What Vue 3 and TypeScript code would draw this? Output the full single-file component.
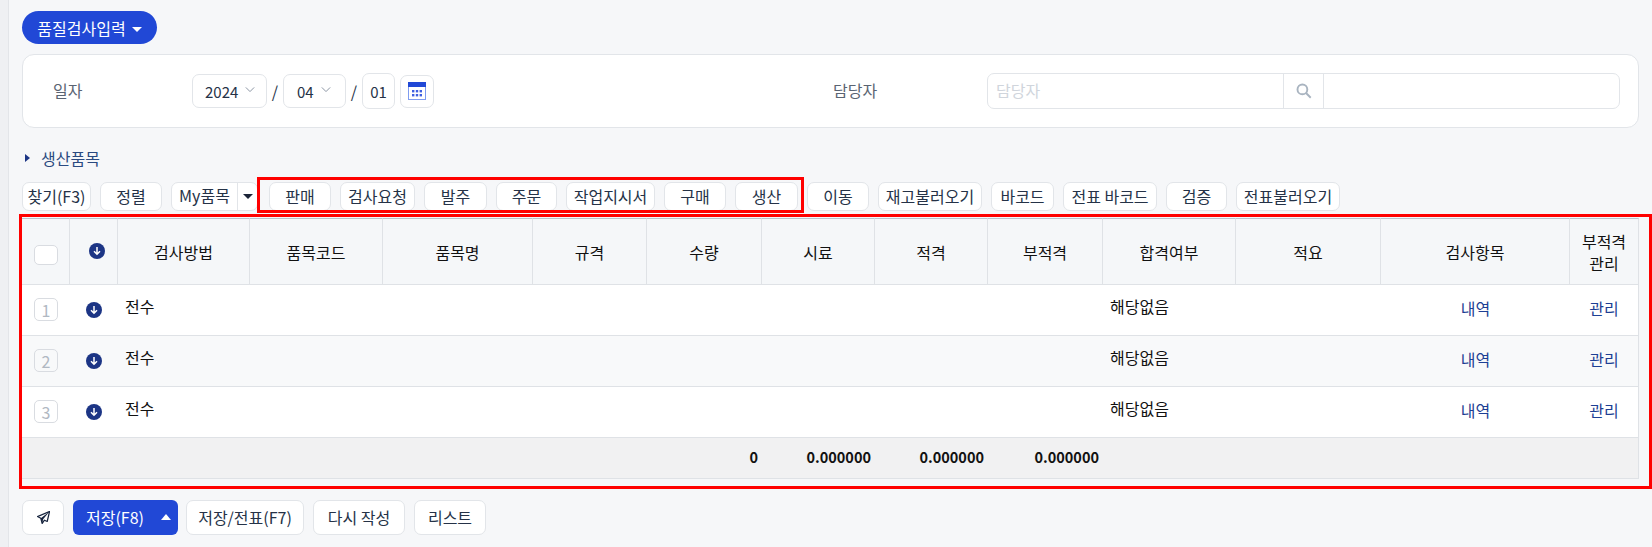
<script setup lang="ts">
interface ToolButton {
  label: string
  width: number
}

const leftButtons: ToolButton[] = [
  { label: '찾기(F3)', width: 69 },
  { label: '정렬', width: 62 }
]

const markedButtons: ToolButton[] = [
  { label: '판매', width: 62 },
  { label: '검사요청', width: 75 },
  { label: '발주', width: 63 },
  { label: '주문', width: 61 },
  { label: '작업지시서', width: 89 },
  { label: '구매', width: 62 },
  { label: '생산', width: 63 }
]

const rightButtons: ToolButton[] = [
  { label: '이동', width: 62 },
  { label: '재고불러오기', width: 104 },
  { label: '바코드', width: 63 },
  { label: '전표 바코드', width: 94 },
  { label: '검증', width: 61 },
  { label: '전표불러오기', width: 104 }
]

const columnWidths = [48, 48, 132, 133, 150, 114, 115, 113, 113, 115, 133, 145, 189, 69]
const headers = ['검사방법', '품목코드', '품목명', '규격', '수량', '시료', '적격', '부적격', '합격여부', '적요', '검사항목']
const rows = [1, 2, 3]
</script>

<template>
  <div class="page">
    <div class="strip"></div>
    <main class="main">
      <button class="pill">품질검사입력 <span class="caret-down"></span></button>

      <section class="card">
        <div class="field date-field">
          <label class="label date-label">일자</label>
          <div class="select year">2024<svg class="chev" viewBox="0 0 12 8"><path d="M1 1.5l5 5 5-5" /></svg></div>
          <span class="slash">/</span>
          <div class="select month">04<svg class="chev" viewBox="0 0 12 8"><path d="M1 1.5l5 5 5-5" /></svg></div>
          <span class="slash">/</span>
          <div class="day">01</div>
          <button class="cal-btn">
            <svg width="18" height="18" viewBox="0 0 18 18">
              <rect x="0.5" y="0.5" width="17" height="17" fill="#fff" stroke="#7f9cf0" />
              <rect x="0" y="0" width="18" height="5" fill="#2148d6" />
              <g fill="#3f5fe0">
                <rect x="4" y="8" width="2.4" height="2.4" />
                <rect x="7.8" y="8" width="2.4" height="2.4" />
                <rect x="11.6" y="8" width="2.4" height="2.4" />
                <rect x="4" y="12" width="2.4" height="2.4" />
                <rect x="7.8" y="12" width="2.4" height="2.4" />
                <rect x="11.6" y="12" width="2.4" height="2.4" />
              </g>
            </svg>
          </button>
        </div>
        <div class="field person-field">
          <label class="label person-label">담당자</label>
          <div class="person-input">
            <span class="placeholder">담당자</span>
            <span class="search">
              <svg width="16" height="16" viewBox="0 0 15 15" fill="none" stroke="#a9b4c0" stroke-width="1.8">
                <circle cx="6" cy="6" r="4.6" />
                <path d="M9.4 9.4l4.4 4.4" />
              </svg>
            </span>
            <span class="person-name"></span>
          </div>
        </div>
      </section>

      <div class="section-title"><span class="caret-right"></span>생산품목</div>

      <div class="toolbar">
        <button v-for="b in leftButtons" :key="b.label" class="tool" :style="{ width: b.width + 'px' }">{{ b.label }}</button>
        <div class="my-item">
          <span class="my-text">My품목</span>
          <span class="my-drop"><span class="caret-dark"></span></span>
        </div>
        <div class="marked-group">
          <button v-for="b in markedButtons" :key="b.label" class="tool" :style="{ width: b.width + 'px' }">{{ b.label }}</button>
          <div class="mark mark-tools"></div>
        </div>
        <button v-for="b in rightButtons" :key="b.label" class="tool" :style="{ width: b.width + 'px' }">{{ b.label }}</button>
      </div>

      <div class="table-wrap">
        <table class="grid">
          <colgroup>
            <col v-for="(w, i) in columnWidths" :key="i" :style="{ width: w + 'px' }" />
          </colgroup>
          <thead>
            <tr>
              <th><span class="check"></span></th>
              <th>
                <svg class="down head-down" viewBox="0 0 16 16">
                  <circle cx="8" cy="8" r="8" fill="#1c3585" />
                  <path d="M8 4v7M5 8.2L8 11.2l3-3" fill="none" stroke="#fff" stroke-width="1.5" />
                </svg>
              </th>
              <th v-for="h in headers" :key="h">{{ h }}</th>
              <th class="wrap">부적격<br />관리</th>
            </tr>
          </thead>
          <tbody>
            <tr v-for="n in rows" :key="n">
              <td class="center"><span class="num">{{ n }}</span></td>
              <td class="center">
                <svg class="down" viewBox="0 0 16 16">
                  <circle cx="8" cy="8" r="8" fill="#1c3585" />
                  <path d="M8 4v7M5 8.2L8 11.2l3-3" fill="none" stroke="#fff" stroke-width="1.5" />
                </svg>
              </td>
              <td class="text">전수</td>
              <td colspan="7"></td>
              <td class="text">해당없음</td>
              <td></td>
              <td class="link">내역</td>
              <td class="link">관리</td>
            </tr>
          </tbody>
          <tfoot>
            <tr>
              <td colspan="6"></td>
              <td class="sum">0</td>
              <td class="sum">0.000000</td>
              <td class="sum">0.000000</td>
              <td class="sum">0.000000</td>
              <td colspan="4"></td>
            </tr>
          </tfoot>
        </table>
        <div class="mark mark-table"></div>
      </div>

      <div class="actions">
        <button class="act plane">
          <svg width="13" height="13" viewBox="0 0 14 14">
            <path d="M13.5 0.5L0.5 6l3.6 1.8L5.6 13.5l2.4-3.6 3 1.4z" fill="#fff" stroke="#16233d" stroke-width="1.3" stroke-linejoin="round" />
            <path d="M13.5 0.5L4.1 7.8l1.5 5.7 1-4.6z" fill="#16233d" />
          </svg>
        </button>
        <button class="save"><span>저장(F8)</span><span class="caret-up"></span></button>
        <button class="act w-slip">저장/전표(F7)</button>
        <button class="act w-reset">다시 작성</button>
        <button class="act w-list">리스트</button>
      </div>
    </main>
  </div>
</template>

<style>
html,
body {
  margin: 0;
  background: #f6f7f9;
}
</style>

<style scoped>
.page {
  display: flex;
  width: 1652px;
  height: 547px;
  overflow: hidden;
  background: #f6f7f9;
  font-family: "Noto Sans CJK KR", "Noto Sans", sans-serif;
  font-size: 16px;
  color: #253247;
}
button {
  font: inherit;
  color: inherit;
  padding: 0;
  cursor: pointer;
}
.strip {
  flex: none;
  width: 8px;
  background: #eff0f3;
  border-right: 1px solid #e3e5e9;
}
.main {
  flex: 1;
  min-width: 0;
  padding: 11px 13px 0 13px;
}
.pill {
  display: flex;
  align-items: center;
  justify-content: center;
  gap: 6px;
  width: 135px;
  height: 33px;
  border: 0;
  border-radius: 17px;
  background: #2148d6;
  color: #fff;
}
.caret-down {
  width: 0;
  height: 0;
  margin-top: 3px;
  border-left: 5px solid transparent;
  border-right: 5px solid transparent;
  border-top: 5px solid #fff;
}
.card {
  display: flex;
  align-items: center;
  height: 74px;
  margin-top: 10px;
  box-sizing: border-box;
  border: 1px solid #e2e5e9;
  border-radius: 12px;
  background: #fff;
}
.field {
  display: flex;
  align-items: center;
}
.date-field {
  width: 810px;
}
.label {
  padding-bottom: 2px;
  color: #5a6472;
}
.date-label {
  width: 139px;
  padding-left: 30px;
  box-sizing: border-box;
  margin-right: 30px;
}
.select {
  display: flex;
  align-items: center;
  box-sizing: border-box;
  height: 34px;
  padding-left: 12px;
  border: 1px solid #e2e5e9;
  border-radius: 7px;
  font-size: 15px;
}
.year {
  width: 75px;
}
.month {
  width: 63px;
  padding-left: 13px;
}
.chev {
  width: 10px;
  height: 7px;
  margin-left: 7px;
  margin-top: -3px;
  fill: none;
  stroke: #8b95a3;
  stroke-width: 1.2;
}
.slash {
  width: 16px;
  text-align: center;
  font-size: 16px;
  margin-top: -1px;
}
.day {
  display: flex;
  align-items: center;
  justify-content: center;
  box-sizing: border-box;
  width: 33px;
  height: 36px;
  border: 1px solid #e2e5e9;
  border-radius: 7px;
  font-size: 15px;
}
.cal-btn {
  display: flex;
  align-items: center;
  justify-content: center;
  width: 34px;
  height: 33px;
  margin-left: 5px;
  border: 1px solid #e2e5e9;
  border-radius: 7px;
  background: #fff;
}
.person-label {
  width: 154px;
  padding-left: 0;
}
.person-input {
  display: flex;
  box-sizing: border-box;
  width: 633px;
  height: 36px;
  border: 1px solid #e2e5e9;
  border-radius: 7px;
}
.placeholder {
  width: 287px;
  padding-left: 8px;
  line-height: 33px;
  color: #d0d5dc;
}
.search {
  display: flex;
  align-items: center;
  justify-content: center;
  box-sizing: border-box;
  width: 41px;
  border-left: 1px solid #e2e5e9;
  border-right: 1px solid #e2e5e9;
}
.section-title {
  display: flex;
  align-items: center;
  height: 20px;
  margin-top: 20px;
  color: #2a4a80;
}
.caret-right {
  width: 0;
  height: 0;
  margin-left: 3px;
  margin-right: 11px;
  border-top: 4px solid transparent;
  border-bottom: 4px solid transparent;
  border-left: 5px solid #1c3585;
}
.toolbar {
  display: flex;
  height: 29px;
  margin-top: 14px;
  gap: 9px;
}
.tool {
  flex: none;
  box-sizing: border-box;
  height: 29px;
  padding-bottom: 2px;
  border: 1px solid #e2e5e9;
  border-radius: 7px;
  background: #fff;
  white-space: nowrap;
}
.my-item {
  flex: none;
  display: flex;
  box-sizing: border-box;
  width: 87px;
  height: 29px;
  margin-right: 2px;
  border: 1px solid #e2e5e9;
  border-radius: 7px;
  background: #fff;
}
.my-text {
  width: 65px;
  line-height: 25px;
  text-align: center;
}
.my-drop {
  flex: 1;
  display: flex;
  align-items: center;
  justify-content: center;
  border-left: 1px solid #e2e5e9;
}
.caret-dark {
  width: 0;
  height: 0;
  border-left: 5px solid transparent;
  border-right: 5px solid transparent;
  border-top: 5px solid #1b2438;
}
.marked-group {
  position: relative;
  display: flex;
  gap: 9px;
}
.mark {
  position: absolute;
  box-sizing: border-box;
  border: 3px solid #ff0000;
  pointer-events: none;
}
.mark-tools {
  top: -5px;
  bottom: -2px;
  left: -12px;
  right: -6px;
}
.table-wrap {
  position: relative;
  margin-top: 7px;
}
.mark-table {
  top: -4px;
  bottom: -10px;
  left: -3px;
  right: -13px;
}
.grid {
  width: 100%;
  table-layout: fixed;
  border-collapse: separate;
  border-spacing: 0;
  color: #111;
}
th {
  height: 67px;
  padding: 0;
  box-sizing: border-box;
  background: #f5f7f9;
  border-top: 1px solid #b9c3cd;
  border-right: 1px solid #dfe2e6;
  border-bottom: 1px solid #dfe2e6;
  font-weight: 400;
  text-align: center;
}
th:last-child {
  line-height: 22px;
}
td {
  height: 51px;
  padding: 0;
  box-sizing: border-box;
  border-bottom: 1px solid #dfe2e6;
  background: #fff;
}
td:last-child {
  border-right: 1px solid #dfe2e6;
}
tbody tr:nth-child(2) td {
  background: #f8f9fa;
}
.check {
  display: inline-block;
  box-sizing: border-box;
  width: 24px;
  height: 20px;
  margin-top: 6px;
  vertical-align: middle;
  border: 1px solid #d9dce1;
  border-radius: 5px;
  background: #fff;
}
.down {
  display: block;
  width: 16px;
  height: 16px;
  margin: 0 auto;
}
.head-down {
  margin-left: 19px;
  margin-top: -2px;
}
.center {
  text-align: center;
}
.num {
  display: inline-block;
  box-sizing: border-box;
  width: 24px;
  height: 23px;
  line-height: 22px;
  border: 1px solid #d9dce1;
  border-radius: 5px;
  color: #b0b8c2;
}
.text {
  padding-left: 7px;
  padding-bottom: 9px;
}
.link {
  text-align: center;
  color: #1d3f94;
  padding-bottom: 4px;
}
tfoot td {
  height: 41px;
  background: #f1f1f2;
}
.sum {
  padding-right: 4px;
  padding-bottom: 3px;
  text-align: right;
  font-size: 14.5px;
  font-weight: 700;
}
.actions {
  display: flex;
  margin-top: 21px;
  gap: 9px;
}
.act {
  box-sizing: border-box;
  height: 35px;
  padding-bottom: 1px;
  border: 1px solid #e2e5e9;
  border-radius: 7px;
  background: #fff;
}
.plane {
  display: flex;
  align-items: center;
  justify-content: center;
  width: 42px;
}
.save {
  display: flex;
  align-items: center;
  justify-content: space-between;
  box-sizing: border-box;
  width: 105px;
  height: 35px;
  margin-right: -1px;
  padding: 0 7px 1px 13px;
  border: 0;
  border-radius: 6px;
  background: #2148d6;
  color: #fff;
}
.caret-up {
  width: 0;
  height: 0;
  border-left: 5.5px solid transparent;
  border-right: 5.5px solid transparent;
  border-bottom: 6px solid #fff;
}
.w-slip {
  width: 118px;
}
.w-reset {
  width: 92px;
}
.w-list {
  width: 72px;
}
</style>
